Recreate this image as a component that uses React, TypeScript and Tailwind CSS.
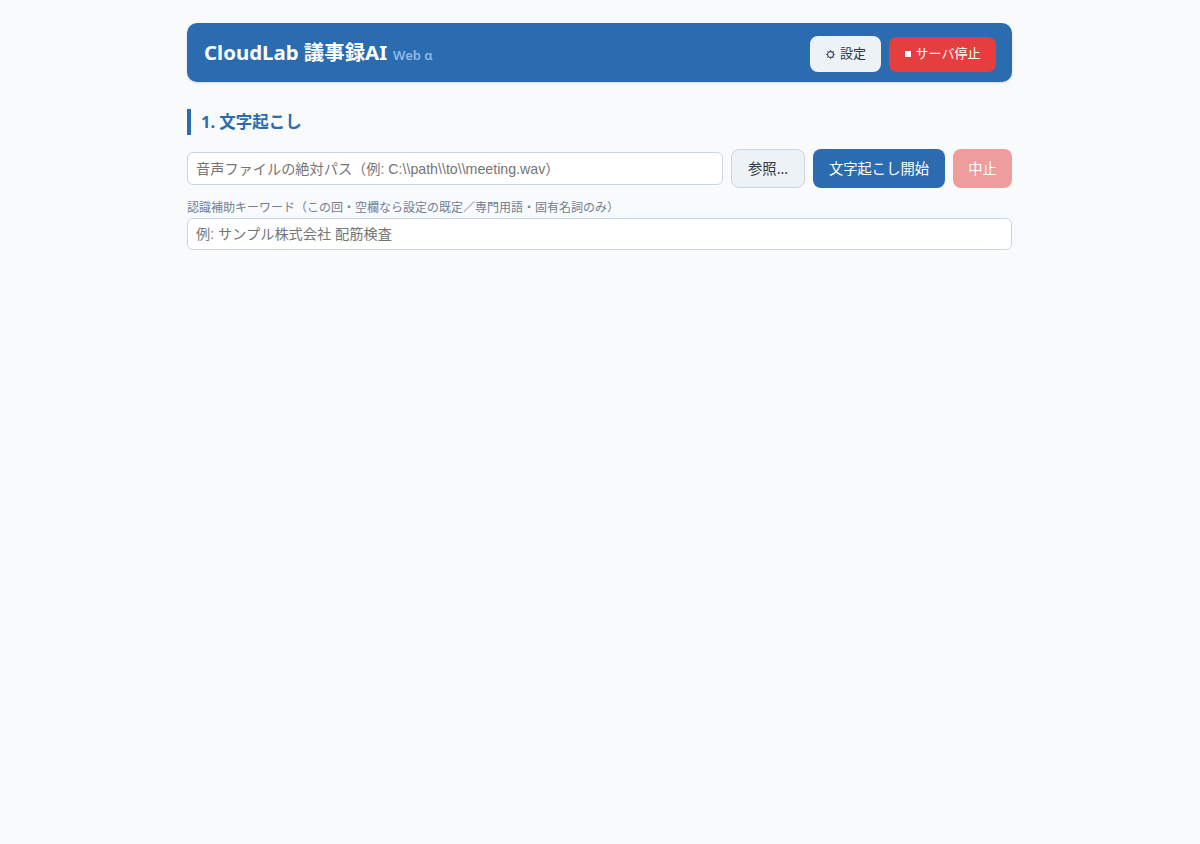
export default function App() {
  return (
    <div className="min-h-[844px] bg-[#f8fafc] font-['Noto_Sans','Noto_Sans_CJK_JP',sans-serif] text-[#2d3748]">
      <div className="mx-auto w-[826px] pt-[23px] pr-px">
        <header className="flex h-[59px] items-center justify-between rounded-[10px] bg-[#2b6cb0] pr-[16px] pl-[17px] shadow-sm">
          <h1 className="flex items-baseline text-[20.4px] font-bold text-white">
            CloudLab 議事録AI
            <span className="ml-[6px] text-[13px] font-semibold text-[#90b8e8]">Web α</span>
          </h1>
          <div className="mt-[3px] flex items-center gap-2">
            <button className="flex h-[36px] w-[71px] items-center justify-center gap-[4px] rounded-lg bg-[#edf2f7] text-[13px] text-[#2d3748]">
              <svg width="11" height="11" viewBox="0 0 11 11" fill="none" stroke="#4a5568" aria-hidden="true">
                <circle cx="5.5" cy="5.5" r="3" strokeWidth="1.3" />
                <path d="M5.5 0.8v1.4M5.5 8.8v1.4M0.8 5.5h1.4M8.8 5.5h1.4M2.2 2.2l1 1M7.8 7.8l1 1M2.2 8.8l1-1M7.8 3.2l1-1" strokeWidth="0.8" />
              </svg>
              設定
            </button>
            <button className="flex h-[35px] w-[107px] items-center justify-center gap-[5px] rounded-lg bg-[#e53e3e] text-[13px] text-white">
              <span className="h-[6px] w-[6px] bg-white" />
              サーバ停止
            </button>
          </div>
        </header>
        <h2 className="mt-[27px] border-l-4 border-[#2b6cb0] pl-[10px] text-[16.5px] leading-[26px] font-bold text-[#2b6cb0]">1. 文字起こし</h2>
        <div className="mt-[14px] flex items-center gap-2">
          <input readOnly placeholder="音声ファイルの絶対パス（例: C:\\path\\to\\meeting.wav）" className="h-[33px] min-w-0 flex-1 rounded-md border border-[#cbd5e0] bg-white px-2 font-['Liberation_Sans','Noto_Sans_CJK_JP',sans-serif] text-[14.2px] placeholder:text-[#757575]" />
          <button className="h-[39px] w-[74px] rounded-lg border border-[#cbd5e0] bg-[#edf2f7] text-[14.3px] text-[#2d3748]">参照…</button>
          <button className="h-[39px] w-[132px] rounded-lg bg-[#2b6cb0] text-[14.3px] text-white">文字起こし開始</button>
          <button className="h-[39px] w-[59px] rounded-lg bg-[#e53e3e]/50 text-[14.3px] text-white">中止</button>
        </div>
        <label className="mt-[12px] block text-[12px] leading-[16px] text-[#718096]">認識補助キーワード（この回・空欄なら設定の既定／専門用語・固有名詞のみ）</label>
        <input readOnly placeholder="例: サンプル株式会社 配筋検査" className="mt-[2px] block h-[32px] w-full rounded-md border border-[#cbd5e0] bg-white px-2 font-['Liberation_Sans','Noto_Sans_CJK_JP',sans-serif] text-[14.2px] placeholder:text-[#757575]" />
      </div>
    </div>
  );
}
